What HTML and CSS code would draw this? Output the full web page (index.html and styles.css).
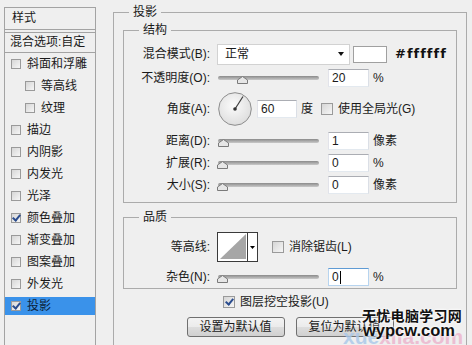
FILE: index.html
```html
<!DOCTYPE html>
<html lang="zh-CN">
<head>
    <meta charset="UTF-8">
    <meta name="viewport" content="width=device-width, initial-scale=1.0">
    <title>图层样式 - 投影</title>
    <link rel="stylesheet" href="styles.css">
</head>
<body>

    <div class="dialog">
        <!-- left: style list -->
        <ul class="style-list">
            <li class="list-head">样式</li>
            <li class="list-blend">混合选项:自定</li>
            <li class="item"><span class="cb"></span>斜面和浮雕</li>
            <li class="item sub"><span class="cb"></span>等高线</li>
            <li class="item sub"><span class="cb"></span>纹理</li>
            <li class="item"><span class="cb"></span>描边</li>
            <li class="item"><span class="cb"></span>内阴影</li>
            <li class="item"><span class="cb"></span>内发光</li>
            <li class="item"><span class="cb"></span>光泽</li>
            <li class="item"><span class="cb checked"></span>颜色叠加</li>
            <li class="item"><span class="cb"></span>渐变叠加</li>
            <li class="item"><span class="cb"></span>图案叠加</li>
            <li class="item"><span class="cb"></span>外发光</li>
            <li class="item selected"><span class="cb checked"></span>投影</li>
        </ul>

        <!-- right: drop shadow settings -->
        <div class="settings">
            <fieldset class="group outer">
                <legend>投影</legend>

                <fieldset class="group inner">
                    <legend>结构</legend>

                    <div class="row first">
                        <span class="lbl">混合模式(B):</span>
                        <div class="select">正常<span class="arrow"></span></div>
                        <span class="swatch"></span>
                        <span class="hex">#ffffff</span>
                    </div>

                    <div class="row">
                        <span class="lbl">不透明度(O):</span>
                        <div class="slider">
                            <div class="track"></div>
                            <svg class="thumb" style="left:20px" width="11" height="8" viewBox="0 0 11 8">
                                <polygon points="5.5,0.5 10.5,4 10.5,7.5 0.5,7.5 0.5,4" fill="#e6e6e6" stroke="#7a7a7a"/>
                            </svg>
                        </div>
                        <span class="field">20</span>
                        <span class="unit">%</span>
                    </div>

                    <div class="row angle-row">
                        <span class="lbl">角度(A):</span>
                        <svg class="dial" width="34" height="34" viewBox="0 0 34 34">
                            <defs>
                                <radialGradient id="dialFill" cx="45%" cy="40%" r="60%">
                                    <stop offset="0" stop-color="#fbfbfb"/>
                                    <stop offset="1" stop-color="#dedede"/>
                                </radialGradient>
                            </defs>
                            <circle cx="17" cy="17" r="16.3" fill="url(#dialFill)" stroke="#8c8c8c"/>
                            <line x1="17" y1="17" x2="25" y2="4.5" stroke="#3c3c3c" stroke-width="1.2"/>
                            <circle cx="17" cy="17" r="1.8" fill="#333"/>
                        </svg>
                        <span class="field narrow">60</span>
                        <span class="unit">度</span>
                        <span class="cb big global-cb"></span>
                        <span class="cb-text">使用全局光(G)</span>
                    </div>

                    <div class="row">
                        <span class="lbl">距离(D):</span>
                        <div class="slider">
                            <div class="track"></div>
                            <svg class="thumb" style="left:1px" width="11" height="8" viewBox="0 0 11 8">
                                <polygon points="5.5,0.5 10.5,4 10.5,7.5 0.5,7.5 0.5,4" fill="#e6e6e6" stroke="#7a7a7a"/>
                            </svg>
                        </div>
                        <span class="field">1</span>
                        <span class="unit">像素</span>
                    </div>

                    <div class="row tight">
                        <span class="lbl">扩展(R):</span>
                        <div class="slider">
                            <div class="track"></div>
                            <svg class="thumb" style="left:0px" width="11" height="8" viewBox="0 0 11 8">
                                <polygon points="5.5,0.5 10.5,4 10.5,7.5 0.5,7.5 0.5,4" fill="#e6e6e6" stroke="#7a7a7a"/>
                            </svg>
                        </div>
                        <span class="field">0</span>
                        <span class="unit">%</span>
                    </div>

                    <div class="row tight">
                        <span class="lbl">大小(S):</span>
                        <div class="slider">
                            <div class="track"></div>
                            <svg class="thumb" style="left:0px" width="11" height="8" viewBox="0 0 11 8">
                                <polygon points="5.5,0.5 10.5,4 10.5,7.5 0.5,7.5 0.5,4" fill="#e6e6e6" stroke="#7a7a7a"/>
                            </svg>
                        </div>
                        <span class="field">0</span>
                        <span class="unit">像素</span>
                    </div>
                </fieldset>

                <fieldset class="group inner quality">
                    <legend>品质</legend>

                    <div class="row contour-row">
                        <span class="lbl">等高线:</span>
                        <svg class="contour" width="41" height="30" viewBox="0 0 41 30">
                            <rect x="0.5" y="0.5" width="40" height="29" fill="#fff" stroke="#3a3a3a"/>
                            <polygon points="3,27 29,2 29,27" fill="#a6a6a6"/>
                            <line x1="30.5" y1="0" x2="30.5" y2="30" stroke="#3a3a3a"/>
                            <polygon points="33,14 38,14 35.5,17" fill="#000"/>
                        </svg>
                        <span class="cb big aa-cb"></span>
                        <span class="cb-text">消除锯齿(L)</span>
                    </div>

                    <div class="row noise-row">
                        <span class="lbl">杂色(N):</span>
                        <div class="slider">
                            <div class="track"></div>
                            <svg class="thumb" style="left:0px" width="11" height="8" viewBox="0 0 11 8">
                                <polygon points="5.5,0.5 10.5,4 10.5,7.5 0.5,7.5 0.5,4" fill="#e6e6e6" stroke="#7a7a7a"/>
                            </svg>
                        </div>
                        <span class="field focused">0<span class="caret"></span></span>
                        <span class="unit">%</span>
                    </div>
                </fieldset>

                <div class="knockout">
                    <span class="cb big checked"></span>
                    <span class="cb-text">图层挖空投影(U)</span>
                </div>

                <div class="buttons">
                    <button class="btn">设置为默认值</button>
                    <button class="btn">复位为默认值</button>
                </div>
            </fieldset>
        </div>
    </div>

    <!-- site watermark over the corner -->
    <div class="watermark">
        <div class="wm-back"><span class="wm-blue">xue</span><span class="wm-pink">xila.com</span></div>
        <div class="wm-name">无忧电脑学习网</div>
        <div class="wm-url">wypcw.com</div>
    </div>

</body>
</html>
```

FILE: styles.css
```css
* {
    margin: 0;
    padding: 0;
    box-sizing: border-box;
}

body {
    font-family: "Liberation Sans", "Noto Sans CJK SC", sans-serif;
    font-size: 12px;
    line-height: 16px;
    color: #1a1a1a;
    background: #efefef;
    height: 345px;
    overflow: hidden;
    position: relative;
}

.dialog {
    display: flex;
    align-items: flex-start;
    padding-left: 4px;
}

/* Left list */
.style-list {
    list-style: none;
    width: 92px;
    height: 338px;
    margin-top: 7px;
    border: 1px solid #a3a3a3;
    border-bottom: none;
    flex-shrink: 0;
}

.list-head {
    height: 22px;
    line-height: 20px;
    padding-left: 7px;
    border-bottom: 1px solid #a3a3a3;
}

.list-blend {
    height: 21px;
    margin-top: 2px;
    line-height: 18px;
    padding-left: 5px;
    border-top: 1px solid #a3a3a3;
    border-bottom: 1px solid #a3a3a3;
    white-space: nowrap;
}

.item {
    display: flex;
    align-items: center;
    height: 22px;
    padding: 2px 0;
    white-space: nowrap;
}

.item .cb {
    margin: 0 6px 0 6px;
}

.item.sub .cb {
    margin-left: 20px;
}

.item.selected {
    background: #3a92ea;
    background-clip: content-box;
    color: #0c1f3a;
}

/* Checkboxes */
.cb {
    display: inline-flex;
    align-items: center;
    justify-content: center;
    width: 10px;
    height: 10px;
    border: 1px solid #9a9a9a;
    background: linear-gradient(135deg, #d6d6d6, #f6f6f6);
    flex-shrink: 0;
}

.cb.big {
    width: 12px;
    height: 12px;
}

.cb.checked::after {
    content: "";
    width: 3px;
    height: 6px;
    margin-top: -2px;
    border: solid #2a4c8e;
    border-width: 0 2px 2px 0;
    transform: rotate(40deg);
}

.cb-text {
    margin-left: 5px;
    white-space: nowrap;
}

/* Right settings */
.settings {
    margin-left: 17px;
    width: 354px;
    flex-shrink: 0;
}

.group {
    border: 1px solid #ababab;
    min-width: 0;
}

.group legend {
    padding: 0 4px;
    line-height: 16px;
}

.outer {
    margin-top: 4px;
    padding: 2px 9px 0;
    height: 342px;
}

.outer > legend {
    margin-left: 6px;
}

.inner {
    padding: 5px 0 6px;
}

.inner > legend {
    margin-left: 15px;
}

.quality {
    margin-top: 6px;
    padding: 7px 0 0;
}

.row {
    display: flex;
    align-items: center;
    height: 22px;
    margin-top: 2px;
    white-space: nowrap;
}

.row.first {
    margin-top: 0;
}

.row.tight {
    margin-top: 0;
}

.lbl {
    width: 86px;
    margin-right: 7px;
    text-align: right;
    flex-shrink: 0;
}

.select {
    display: flex;
    align-items: center;
    width: 133px;
    height: 21px;
    padding-left: 7px;
    background: #fff;
    border: 1px solid #d2d2d2;
}

.arrow {
    margin-left: auto;
    margin-right: 5px;
    border-left: 3.5px solid transparent;
    border-right: 3.5px solid transparent;
    border-top: 4px solid #111;
}

.swatch {
    width: 34px;
    height: 17px;
    margin-left: 3px;
    background: #fff;
    border: 1px solid #a0a0a0;
}

.hex {
    margin-left: 8px;
    font-family: "DejaVu Sans", sans-serif;
    font-weight: bold;
    font-size: 13px;
    letter-spacing: 1px;
    color: #111;
}

/* Sliders */
.slider {
    position: relative;
    width: 105px;
    height: 8px;
    margin-top: 4px;
    flex-shrink: 0;
}

.track {
    height: 4px;
    margin: 0 3px 0 1px;
    border-radius: 2px;
    background: linear-gradient(#8a8a8a, #c9c9c9);
}

.thumb {
    position: absolute;
    top: 0;
}

.field {
    display: flex;
    align-items: center;
    width: 41px;
    height: 18px;
    margin-left: 6px;
    padding-left: 3px;
    background: #fff;
    border: 1px solid;
    border-color: #abadb3 #dbdfe6 #e3e9ef #e2e3ea;
}

.field.narrow {
    width: 40px;
    margin-left: 5px;
}

.field.focused {
    border-color: #5f9bd4 #b7d4ef #b7d4ef #b7d4ef;
}

.caret {
    width: 1px;
    height: 13px;
    margin-left: 1px;
    background: #000;
}

.unit {
    margin-left: 4px;
}

/* Angle */
.angle-row {
    height: 36px;
}

.dial {
    margin-left: 1px;
    flex-shrink: 0;
}

.global-cb {
    margin-left: 8px;
}

.row:nth-child(5) {
    margin-top: 3px;
}

/* Quality */
.contour-row {
    height: 30px;
    margin-top: 0;
}

.contour {
    flex-shrink: 0;
}

.aa-cb {
    margin-left: 14px;
}

.noise-row {
    margin-top: 4px;
}

.knockout {
    display: flex;
    align-items: center;
    height: 20px;
    margin-top: 3px;
    padding-left: 100px;
}

.buttons {
    display: flex;
    justify-content: center;
    gap: 11px;
    margin-top: 5px;
}

.btn {
    width: 98px;
    height: 20px;
    font: inherit;
    color: #1a1a1a;
    border: 1px solid #707070;
    border-radius: 3px;
    background: linear-gradient(#f3f3f3 0%, #ebebeb 50%, #dddddd 51%, #d0d0d0 100%);
}

/* Watermark */
.watermark {
    position: absolute;
    left: 343px;
    top: 308px;
    width: 129px;
    height: 37px;
    overflow: hidden;
}

.wm-back {
    position: absolute;
    left: 0;
    top: 20px;
    font-family: "Liberation Sans", sans-serif;
    font-weight: bold;
    font-size: 21px;
    line-height: 17px;
    white-space: nowrap;
    opacity: 0.8;
}

.wm-blue {
    color: #a9c8ea;
}

.wm-pink {
    color: #ecb3cc;
}

.wm-name {
    position: relative;
    margin-left: 19px;
    font-family: "Noto Sans CJK SC", sans-serif;
    font-weight: bold;
    font-size: 14px;
    line-height: 15px;
    letter-spacing: 0.3px;
    color: #111;
    text-shadow: 0 0 3px #fff, 0 0 3px #fff;
}

.wm-url {
    position: relative;
    margin-left: 20px;
    font-family: "Liberation Sans", sans-serif;
    font-weight: bold;
    font-size: 16.5px;
    line-height: 14px;
    color: #111;
    text-shadow: 0 0 3px #fff, 0 0 3px #fff;
}
```
